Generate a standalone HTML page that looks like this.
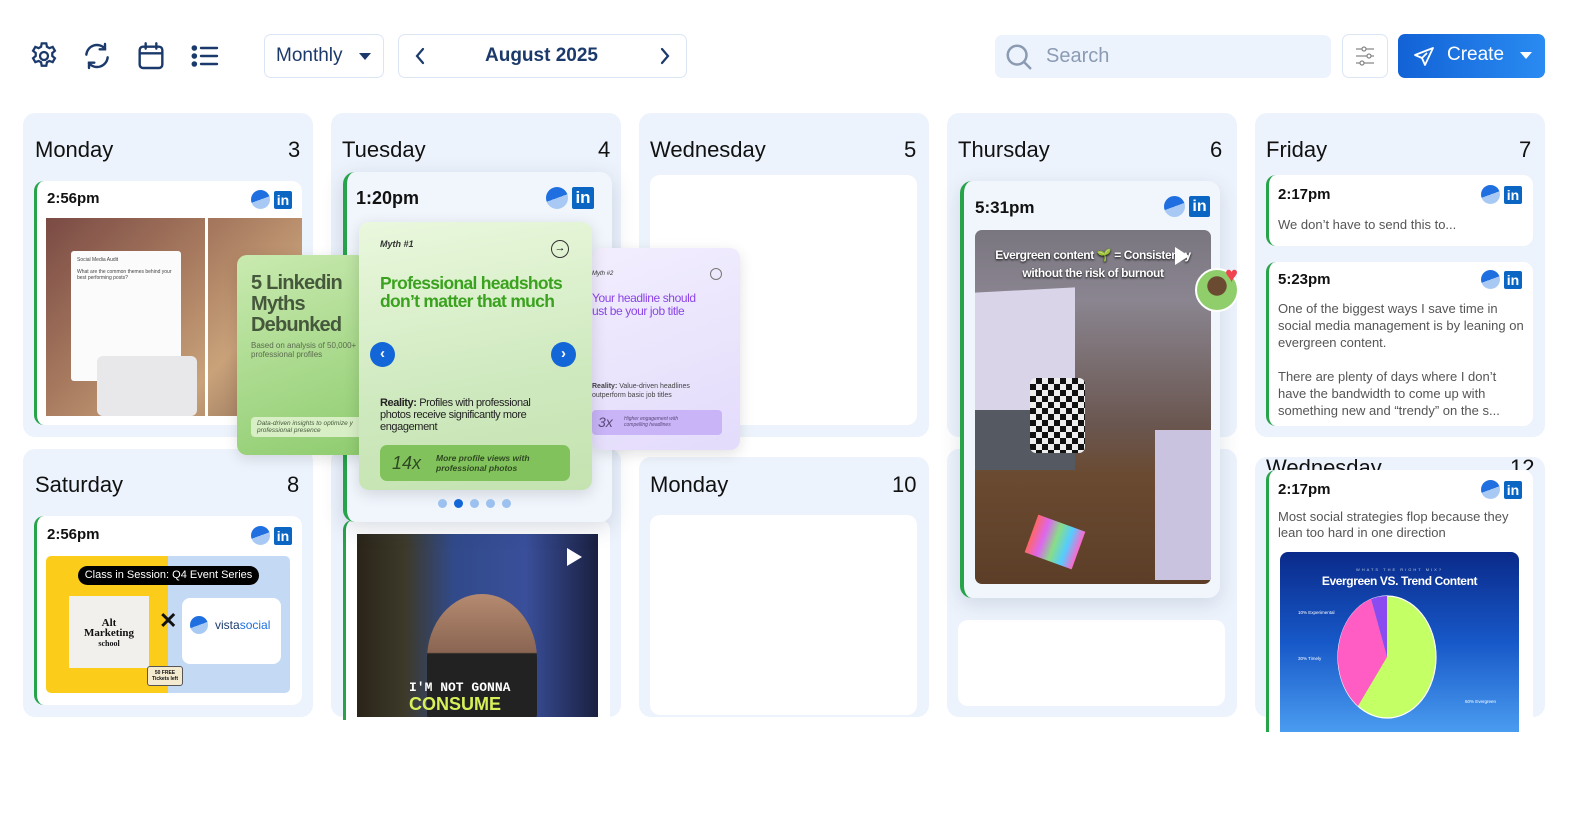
<!DOCTYPE html>
<html><head><meta charset="utf-8"><style>
*{box-sizing:border-box;margin:0;padding:0}
body{width:1590px;height:820px;background:#fff;font-family:"Liberation Sans",sans-serif;position:relative;overflow:hidden;color:#111}
.a{position:absolute}
.cell{position:absolute;background:#edf3fc;border-radius:12px}
.hd{position:absolute;font-size:22px;color:#111}
.card{position:absolute;background:#fff;border-radius:10px;border-left:3px solid #27a34a;overflow:hidden}
.tm{position:absolute;font-weight:bold;font-size:15px;color:#111}
.ic{position:absolute;display:flex;gap:4px;align-items:center}
.vs{width:19px;height:19px;border-radius:50%;background:linear-gradient(160deg,#1f6fe0 50%,#a9c9f5 50%)}
.li{width:18px;height:18px;background:#0a66c2;border-radius:2px;color:#fff;font-weight:bold;font-size:14px;line-height:18px;text-align:center;font-family:"Liberation Sans",sans-serif}
.tx{position:absolute;font-size:13px;color:#555;line-height:17px}
.btn{position:absolute;border:1.5px solid #dbe6f5;border-radius:7px;background:#fff}
</style></head><body>

<!-- toolbar -->
<svg class="a" style="left:28px;top:40px" width="32" height="32" viewBox="0 0 24 24" fill="none" stroke="#1b3a6b" stroke-width="1.7"><path d="M10.3 2.5h3.4l.5 2.6 1.8 1 2.5-.9 1.7 2.9-2 1.7v2.2l2 1.7-1.7 2.9-2.5-.9-1.8 1-.5 2.6h-3.4l-.5-2.6-1.8-1-2.5.9-1.7-2.9 2-1.7v-2.2l-2-1.7 1.7-2.9 2.5.9 1.8-1z"/><circle cx="12" cy="12" r="3"/></svg>
<svg class="a" style="left:81px;top:40px" width="32" height="32" viewBox="0 0 24 24" fill="none" stroke="#1b3a6b" stroke-width="1.8" stroke-linecap="round"><path d="M4 11a8 8 0 0 1 14-4.5M20 13a8 8 0 0 1-14 4.5"/><path d="M18 3v4h-4M6 21v-4h4"/></svg>
<svg class="a" style="left:135px;top:40px" width="32" height="32" viewBox="0 0 24 24" fill="none" stroke="#1b3a6b" stroke-width="1.8" stroke-linecap="round"><rect x="3.5" y="5" width="17" height="16" rx="2.5"/><path d="M3.5 10h17M8 2.5v4M16 2.5v4"/></svg>
<svg class="a" style="left:189px;top:40px" width="32" height="32" viewBox="0 0 24 24" fill="none" stroke="#1b3a6b" stroke-width="1.8" stroke-linecap="round"><path d="M9 6h12M9 12h12M9 18h12"/><circle cx="4" cy="6" r="1.2" fill="#1b3a6b"/><circle cx="4" cy="12" r="1.2" fill="#1b3a6b"/><circle cx="4" cy="18" r="1.2" fill="#1b3a6b"/></svg>

<div class="btn" style="left:264px;top:34px;width:120px;height:44px"><span class="a" style="left:11px;top:10px;font-size:19px;color:#1b3a6b">Monthly</span><span class="a" style="left:94px;top:18px;border:6px solid transparent;border-top:7px solid #1b3a6b"></span></div>
<div class="btn" style="left:398px;top:34px;width:289px;height:44px">
<svg class="a" style="left:12px;top:11px" width="20" height="20" viewBox="0 0 20 20" fill="none" stroke="#1b3a6b" stroke-width="2.2" stroke-linecap="round"><path d="M12 3l-6 7 6 7"/></svg>
<span class="a" style="left:86px;top:10px;font-size:19px;color:#1b3a6b;font-weight:bold">August 2025</span>
<svg class="a" style="left:255px;top:11px" width="20" height="20" viewBox="0 0 20 20" fill="none" stroke="#1b3a6b" stroke-width="2.2" stroke-linecap="round"><path d="M8 3l6 7-6 7"/></svg></div>

<div class="a" style="left:995px;top:35px;width:336px;height:43px;background:#edf3fc;border-radius:7px">
<svg class="a" style="left:9px;top:7px" width="30" height="30" viewBox="0 0 24 24" fill="none" stroke="#8a9bb3" stroke-width="2" stroke-linecap="round"><circle cx="10.5" cy="10.5" r="7.5"/><path d="M16 16l5 5"/></svg>
<span class="a" style="left:51px;top:10px;font-size:20px;color:#8a9bb3">Search</span></div>
<div class="btn" style="left:1342px;top:34px;width:46px;height:44px">
<svg class="a" style="left:10px;top:9px" width="24" height="24" viewBox="0 0 24 24" fill="none" stroke="#888" stroke-width="1.3"><path d="M3 5h6M13 5h8M3 12h11M18 12h3M3 19h4M11 19h10"/><circle cx="11" cy="5" r="2"/><circle cx="16" cy="12" r="2"/><circle cx="9" cy="19" r="2"/></svg></div>
<div class="a" style="left:1398px;top:34px;width:147px;height:44px;border-radius:7px;background:linear-gradient(90deg,#1262d6,#2a8bf2)">
<svg class="a" style="left:14px;top:11px" width="24" height="24" viewBox="0 0 24 24" fill="none" stroke="#fff" stroke-width="1.8" stroke-linejoin="round"><path d="M21 3L3 10l7 3 3 7z"/><path d="M10 13l5-5"/></svg>
<span class="a" style="left:49px;top:10px;font-size:19px;color:#fff">Create</span>
<span class="a" style="left:122px;top:18px;border:6px solid transparent;border-top:7px solid #fff"></span></div>

<!-- cells -->
<div class="cell" style="left:23px;top:113px;width:290px;height:324px"></div>
<div class="cell" style="left:331px;top:113px;width:290px;height:324px"></div>
<div class="cell" style="left:639px;top:113px;width:290px;height:324px"></div>
<div class="cell" style="left:947px;top:113px;width:290px;height:324px"></div>
<div class="cell" style="left:1255px;top:113px;width:290px;height:324px"></div>
<div class="cell" style="left:23px;top:449px;width:290px;height:268px"></div>
<div class="cell" style="left:331px;top:449px;width:290px;height:268px"></div>
<div class="cell" style="left:639px;top:457px;width:290px;height:260px"></div>
<div class="cell" style="left:947px;top:449px;width:290px;height:268px"></div>
<div class="cell" style="left:1255px;top:457px;width:290px;height:260px"></div>

<div class="hd" style="left:35px;top:137px">Monday</div><div class="hd" style="left:288px;top:137px">3</div>
<div class="hd" style="left:342px;top:137px">Tuesday</div><div class="hd" style="left:598px;top:137px">4</div>
<div class="hd" style="left:650px;top:137px">Wednesday</div><div class="hd" style="left:904px;top:137px">5</div>
<div class="hd" style="left:958px;top:137px">Thursday</div><div class="hd" style="left:1210px;top:137px">6</div>
<div class="hd" style="left:1266px;top:137px">Friday</div><div class="hd" style="left:1519px;top:137px">7</div>
<div class="hd" style="left:35px;top:472px">Saturday</div><div class="hd" style="left:287px;top:472px">8</div>
<div class="hd" style="left:650px;top:472px">Monday</div><div class="hd" style="left:892px;top:472px">10</div>
<div class="hd" style="left:1266px;top:455px;height:15px;overflow:hidden">Wednesday</div><div class="hd" style="left:1510px;top:455px;height:15px;overflow:hidden">12</div>

<!-- Wednesday empty -->
<div class="a" style="left:650px;top:175px;width:267px;height:250px;background:#fff;border-radius:10px"></div>
<div class="a" style="left:650px;top:515px;width:267px;height:200px;background:#fff;border-radius:10px"></div>
<div class="a" style="left:958px;top:620px;width:267px;height:86px;background:#fff;border-radius:10px"></div>

<!-- Monday card -->
<div class="card" style="left:34px;top:181px;width:268px;height:244px">
<div class="tm" style="left:10px;top:9px">2:56pm</div>
<div class="ic" style="left:214px;top:9px"><div class="vs"></div><div class="li">in</div></div>
<div class="a" style="left:9px;top:37px;width:259px;height:198px;background:linear-gradient(135deg,#7a4a44,#a77a5f 40%,#c9a27a 70%,#8b6a55)"></div>
<div class="a" style="left:34px;top:70px;width:110px;height:130px;background:#fbfbfb;border-radius:3px;font-size:5px;color:#444;padding:6px">Social Media Audit<br><br>What are the common themes behind your best performing posts?</div>
<div class="a" style="left:168px;top:37px;width:3px;height:198px;background:#fff"></div>
<div class="a" style="left:60px;top:175px;width:100px;height:60px;background:#e8e8ea;border-radius:6px"></div>
</div>

<!-- Saturday card -->
<div class="card" style="left:34px;top:516px;width:268px;height:189px">
<div class="tm" style="left:10px;top:10px">2:56pm</div>
<div class="ic" style="left:214px;top:10px"><div class="vs"></div><div class="li">in</div></div>
<div class="a" style="left:9px;top:40px;width:244px;height:137px;background:linear-gradient(90deg,#fbcd1a 50%,#c4d9f3 50%);border-radius:5px"></div>
<div class="a" style="left:41px;top:50px;width:181px;height:19px;background:#000;border-radius:10px;color:#fff;font-size:11px;text-align:center;line-height:19px">Class in Session: Q4 Event Series</div>
<div class="a" style="left:32px;top:80px;width:80px;height:72px;background:#f2f0ec;font-family:'Liberation Serif',serif;font-size:11px;font-weight:bold;text-align:center;padding-top:22px;line-height:10px">Alt<br>Marketing<br><span style="font-size:8px">school</span></div>
<div class="a" style="left:122px;top:92px;font-size:22px;font-weight:bold">✕</div>
<div class="a" style="left:145px;top:82px;width:99px;height:66px;background:#fff;border-radius:8px"></div>
<div class="a vs" style="left:153px;top:100px;width:18px;height:18px"></div>
<div class="a" style="left:178px;top:102px;font-size:12px;color:#1b3a6b">vista<span style="color:#1f6fe0">social</span></div>
<div class="a" style="left:110px;top:150px;width:36px;height:20px;background:#f3ead0;border:1px solid #555;border-radius:3px;font-size:5px;text-align:center;font-weight:bold;padding-top:3px">50 FREE<br>Tickets left</div>
</div>

<!-- Tuesday video card -->
<div class="card" style="left:343px;top:520px;width:267px;height:200px;border-radius:10px 10px 0 0"></div>
<div class="a" style="left:357px;top:534px;width:241px;height:183px;background:linear-gradient(90deg,#2a2418 0%,#3d3a2a 20%,#314a8a 40%,#3a4f9a 70%,#1a2040);overflow:hidden">
<div class="a" style="left:70px;top:60px;width:110px;height:130px;border-radius:50% 50% 10px 10px;background:linear-gradient(#b58a70,#8a6552 45%,#222 46%)"></div>
<div class="a" style="left:52px;top:146px;font-family:'Liberation Mono',monospace;font-weight:bold;font-size:13px;color:#fff">I'M NOT GONNA</div>
<div class="a" style="left:52px;top:160px;font-weight:bold;font-size:18px;color:#d7f05a">CONSUME</div>
<div class="a" style="left:210px;top:14px;border:9px solid transparent;border-left:15px solid #fff;border-right:0"></div>
</div>

<!-- Tuesday popup -->
<div class="a" style="left:343px;top:172px;width:269px;height:350px;background:#f1f6fd;border-radius:12px;border-left:4px solid #27a34a;box-shadow:0 6px 22px rgba(40,60,100,.18)"></div>
<div class="tm" style="left:356px;top:188px;font-size:18px">1:20pm</div>
<div class="ic" style="left:546px;top:187px"><div class="vs" style="width:22px;height:22px"></div><div class="li" style="width:22px;height:22px;font-size:17px;line-height:22px">in</div></div>
<!-- slides -->
<div class="a" style="left:237px;top:255px;width:130px;height:200px;background:linear-gradient(160deg,#c9eab0,#8fcc6f);border-radius:10px;box-shadow:0 4px 14px rgba(0,0,0,.12)">
<div class="a" style="left:14px;top:18px;font-size:20px;font-weight:bold;color:#45583c;line-height:21px;letter-spacing:-.8px">5 Linkedin<br>Myths<br>Debunked</div>
<div class="a" style="left:14px;top:86px;font-size:8px;color:#5b6b50;line-height:9px">Based on analysis of 50,000+<br>professional profiles</div>
<div class="a" style="left:14px;top:162px;width:116px;height:20px;background:#d8efc5;border-radius:4px;font-size:6.5px;font-style:italic;color:#45583c;padding:3px 6px;line-height:7px">Data-driven insights to optimize y<br>professional presence</div>
</div>
<div class="a" style="left:592px;top:248px;width:148px;height:202px;background:linear-gradient(160deg,#f2eefe,#e3dbfb);border-radius:10px;box-shadow:0 4px 14px rgba(0,0,0,.12)">
<div class="a" style="left:0;top:23px;font-size:6px;font-style:italic;color:#333">Myth #2</div>
<div class="a" style="left:118px;top:20px;width:12px;height:12px;border:1px solid #777;border-radius:50%"></div>
<div class="a" style="left:0;top:44px;font-size:12px;color:#8a45e6;line-height:13px;letter-spacing:-.4px">Your headline should<br>ust be your job title</div>
<div class="a" style="left:0;top:134px;font-size:7px;color:#444;line-height:9px"><b>Reality:</b> Value-driven headlines<br>outperform basic job titles</div>
<div class="a" style="left:0;top:162px;width:130px;height:25px;background:#c8b4f6;border-radius:4px"><span class="a" style="left:6px;top:4px;font-size:14px;font-style:italic;color:#5a4a7a">3x</span><span class="a" style="left:32px;top:6px;font-size:5px;font-style:italic;color:#5a4a7a;line-height:6px">Higher engagement with<br>compelling headlines</span></div>
</div>
<div class="a" style="left:359px;top:222px;width:233px;height:268px;background:linear-gradient(170deg,#eaf8dd,#cfe9bf 60%,#c4e3b0);border-radius:10px;box-shadow:0 4px 16px rgba(0,0,0,.14)">
<div class="a" style="left:21px;top:17px;font-size:9px;font-style:italic;font-weight:bold;color:#333">Myth #1</div>
<div class="a" style="left:192px;top:18px;width:18px;height:18px;border:1.3px solid #333;border-radius:50%;font-size:11px;text-align:center;line-height:15px">→</div>
<div class="a" style="left:21px;top:52px;font-size:17.5px;font-weight:bold;color:#3aa21e;line-height:18px;letter-spacing:-.7px">Professional headshots<br>don’t matter that much</div>
<div class="a" style="left:11px;top:120px;width:25px;height:25px;border-radius:50%;background:#1266d8;color:#fff;text-align:center;font-size:15px;line-height:24px;font-weight:bold">‹</div>
<div class="a" style="left:192px;top:120px;width:25px;height:25px;border-radius:50%;background:#1266d8;color:#fff;text-align:center;font-size:15px;line-height:24px;font-weight:bold">›</div>
<div class="a" style="left:21px;top:175px;font-size:11px;color:#222;line-height:12px;letter-spacing:-.4px"><b>Reality:</b> Profiles with professional<br>photos receive significantly more<br>engagement</div>
<div class="a" style="left:21px;top:223px;width:190px;height:36px;background:#82c25c;border-radius:7px"><span class="a" style="left:12px;top:8px;font-size:18px;font-style:italic;color:#2f4a22">14x</span><span class="a" style="left:56px;top:8px;font-size:8.5px;font-style:italic;font-weight:bold;color:#2f4a22;line-height:10px">More profile views with<br>professional photos</span></div>
</div>
<div class="a" style="left:438px;top:499px;display:flex;gap:7px"><i style="width:9px;height:9px;border-radius:50%;background:#9cc1ef"></i><i style="width:9px;height:9px;border-radius:50%;background:#1266d8"></i><i style="width:9px;height:9px;border-radius:50%;background:#9cc1ef"></i><i style="width:9px;height:9px;border-radius:50%;background:#9cc1ef"></i><i style="width:9px;height:9px;border-radius:50%;background:#9cc1ef"></i></div>

<!-- Thursday card -->
<div class="a" style="left:960px;top:181px;width:260px;height:417px;background:#f1f6fd;border-radius:12px;border-left:4px solid #27a34a;box-shadow:0 6px 20px rgba(40,60,100,.15)"></div>
<div class="tm" style="left:975px;top:198px;font-size:17px">5:31pm</div>
<div class="ic" style="left:1164px;top:196px"><div class="vs" style="width:21px;height:21px"></div><div class="li" style="width:21px;height:21px;font-size:16px;line-height:21px">in</div></div>
<div class="a" style="left:975px;top:230px;width:236px;height:354px;border-radius:7px;overflow:hidden;background:linear-gradient(180deg,#7a7680 0%,#8a8590 20%,#6a5650 55%,#6a4a30 70%,#5c3e28 100%)">
<div class="a" style="left:0;top:60px;width:100px;height:130px;background:#d9d4e8;transform:skewY(-3deg)"></div>
<div class="a" style="left:0;top:180px;width:100px;height:60px;background:#555a62"></div>
<div class="a" style="left:55px;top:148px;width:55px;height:75px;border-radius:6px;background:repeating-conic-gradient(#111 0 25%,#eee 0 50%) 0 0/12px 12px"></div>
<div class="a" style="left:180px;top:200px;width:56px;height:150px;background:#c9c3e0"></div>
<div class="a" style="left:55px;top:292px;width:50px;height:40px;background:linear-gradient(90deg,#f66,#d6e,#8d8,#5cf,#f6c);transform:rotate(20deg)"></div>
<div class="a" style="left:0;top:16px;width:236px;text-align:center;font-size:12px;font-weight:bold;color:#fff;line-height:18px;white-space:nowrap;letter-spacing:-.4px;text-shadow:0 1px 2px #000">Evergreen content 🌱 = Consistency<br>without the risk of burnout</div>
<div class="a" style="left:200px;top:17px;border:9px solid transparent;border-left:14px solid #fff;border-right:0"></div>
</div>
<div class="a" style="left:1195px;top:268px;width:44px;height:44px;border-radius:50%;background:radial-gradient(circle at 50% 40%,#6b4a32 30%,#8fce6a 32%);border:2px solid #fff"></div>
<div class="a" style="left:1225px;top:262px;font-size:22px;color:#ef4350">♥</div>

<!-- Friday cards -->
<div class="card" style="left:1266px;top:175px;width:267px;height:71px">
<div class="tm" style="left:9px;top:11px">2:17pm</div>
<div class="ic" style="left:212px;top:10px"><div class="vs"></div><div class="li">in</div></div>
<div class="tx" style="left:9px;top:41px">We don’t have to send this to...</div></div>
<div class="card" style="left:1266px;top:262px;width:267px;height:164px">
<div class="tm" style="left:9px;top:9px">5:23pm</div>
<div class="ic" style="left:212px;top:8px"><div class="vs"></div><div class="li">in</div></div>
<div class="tx" style="left:9px;top:38px;width:250px">One of the biggest ways I save time in social media management is by leaning on evergreen content.<br><br>There are plenty of days where I don’t have the bandwidth to come up with something new and “trendy” on the s...</div></div>
<div class="card" style="left:1266px;top:470px;width:267px;height:262px;border-radius:10px 10px 0 0">
<div class="tm" style="left:9px;top:11px">2:17pm</div>
<div class="ic" style="left:212px;top:10px"><div class="vs"></div><div class="li">in</div></div>
<div class="tx" style="left:9px;top:39px;width:250px;line-height:16px">Most social strategies flop because they lean too hard in one direction</div>
<div class="a" style="left:11px;top:82px;width:239px;height:180px;border-radius:8px 8px 0 0;background:linear-gradient(180deg,#0a2a8a,#1758c8 50%,#4a9cf0);overflow:hidden">
<div class="a" style="left:0;top:15px;width:100%;text-align:center;font-size:4px;color:#bcd;letter-spacing:2px">WHATS THE RIGHT MIX?</div>
<div class="a" style="left:0;top:22px;width:100%;text-align:center;font-size:12px;font-weight:bold;color:#fff;letter-spacing:-.4px">Evergreen VS. Trend Content</div>
<svg class="a" style="left:56px;top:42px" width="102" height="126" viewBox="-51 -63 102 126"><ellipse cx="0" cy="0" rx="49" ry="61" fill="#c4ff66" stroke="#fff" stroke-width="1.2"/><path d="M0 0L-16 -58A49 61 0 0 0 -29 49Z" fill="#ff5cc4"/><path d="M0 0L0 -61A49 61 0 0 0 -16 -58Z" fill="#8a4cf0"/></svg>
<div class="a" style="left:18px;top:58px;font-size:4.5px;color:#fff">10% Experimental</div>
<div class="a" style="left:18px;top:104px;font-size:4.5px;color:#fff">30% Timely</div>
<div class="a" style="left:185px;top:147px;font-size:4.5px;color:#fff">60% Evergreen</div>
</div></div>

</body></html>
